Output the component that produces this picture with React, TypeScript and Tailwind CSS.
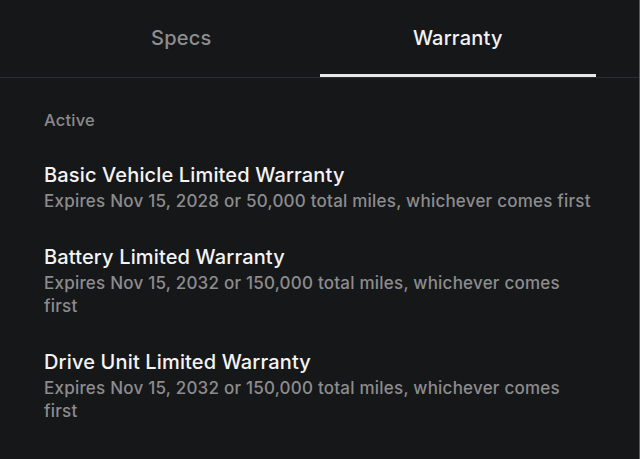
const items = [
  {
    title: "Basic Vehicle Limited Warranty",
    detail: "Expires Nov 15, 2028 or 50,000 total miles, whichever comes first",
  },
  {
    title: "Battery Limited Warranty",
    detail: "Expires Nov 15, 2032 or 150,000 total miles, whichever comes first",
  },
  {
    title: "Drive Unit Limited Warranty",
    detail: "Expires Nov 15, 2032 or 150,000 total miles, whichever comes first",
  },
];

export default function App() {
  return (
    <div
      className="h-[459px] w-[640px] overflow-hidden bg-[#161719] border-r border-[#5a5a5c] text-white"
      style={{ fontFamily: "Inter, 'Noto Sans', sans-serif" }}
    >
      <div className="flex border-b border-[#2c2d30] px-[43px]">
        <button className="flex h-[77px] flex-1 items-center justify-center border-b-[3px] border-transparent pt-[2px] text-[20px] font-medium tracking-[0.2px] text-[#8e8e90]">
          Specs
        </button>
        <button className="flex h-[77px] flex-1 items-center justify-center border-b-[3px] border-[#e8e8e8] pt-[2px] text-[20px] font-medium tracking-[0.2px] text-[#f2f2f2]">
          Warranty
        </button>
      </div>

      <div className="pl-[44px] pr-[47px] pt-[30px]">
        <div className="text-[16.5px] font-medium tracking-[0.2px] text-[#8a8a8c]">Active</div>
        <div className="mt-[28px] flex flex-col gap-[30px]">
          {items.map((it) => (
            <div key={it.title}>
              <div className="text-[20px] font-medium leading-[29px] tracking-[0.15px] text-[#f4f4f4]">{it.title}</div>
              <div className="text-[17px] font-medium leading-[23px] tracking-[0.22px] text-[#8c8c8e]">{it.detail}</div>
            </div>
          ))}
        </div>
      </div>
    </div>
  );
}
